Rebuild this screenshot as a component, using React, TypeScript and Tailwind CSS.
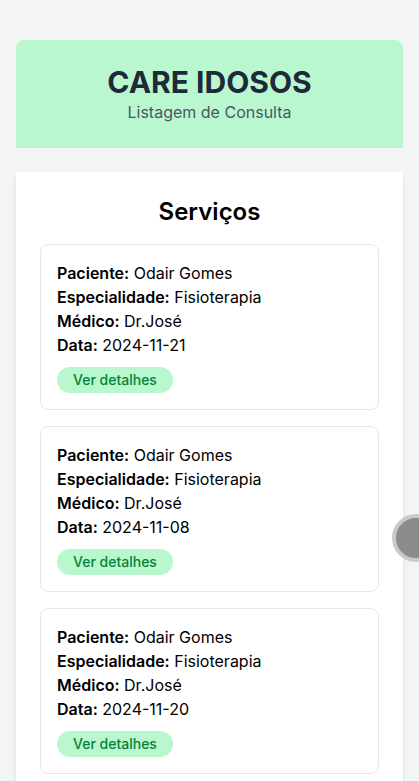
import React from 'react';

type Consulta = {
  paciente: string;
  especialidade: string;
  medico: string;
  data: string;
};

const consultas: Consulta[] = [
  { paciente: 'Odair Gomes', especialidade: 'Fisioterapia', medico: 'Dr.José', data: '2024-11-21' },
  { paciente: 'Odair Gomes', especialidade: 'Fisioterapia', medico: 'Dr.José', data: '2024-11-08' },
  { paciente: 'Odair Gomes', especialidade: 'Fisioterapia', medico: 'Dr.José', data: '2024-11-20' },
];

export default function App() {
  return (
    <div
      className="bg-gray-100 min-h-screen px-4 pt-10 pb-10"
      style={{ fontFamily: 'Inter, "Noto Sans", sans-serif' }}
    >
      {/* Header */}
      <div className="bg-green-200 rounded-t-lg p-6 text-center">
        <h1 className="text-3xl font-bold text-gray-800">CARE IDOSOS</h1>
        <p className="text-base text-gray-600">Listagem de Consulta</p>
      </div>

      {/* Lista */}
      <div className="bg-white shadow-md mt-6 p-6">
        <h2 className="text-2xl font-semibold text-black text-center mb-4">Serviços</h2>
        <div className="flex flex-col gap-4">
          {consultas.map((c, i) => (
            <div key={i} className="border border-gray-200 rounded-lg p-4 text-black">
              <p><span className="font-semibold">Paciente:</span> {c.paciente}</p>
              <p><span className="font-semibold">Especialidade:</span> {c.especialidade}</p>
              <p><span className="font-semibold">Médico:</span> {c.medico}</p>
              <p><span className="font-semibold">Data:</span> {c.data}</p>
              <button className="block mt-[10px] h-[26px] bg-green-200 text-green-700 text-sm font-medium rounded-full px-4">
                Ver detalhes
              </button>
            </div>
          ))}
        </div>
      </div>

      {/* Floating button */}
      <div className="fixed top-[514px] left-[392px] w-12 h-12 rounded-full bg-[#8c8c8c] border-4 border-[#c9c9c9]" />
    </div>
  );
}
